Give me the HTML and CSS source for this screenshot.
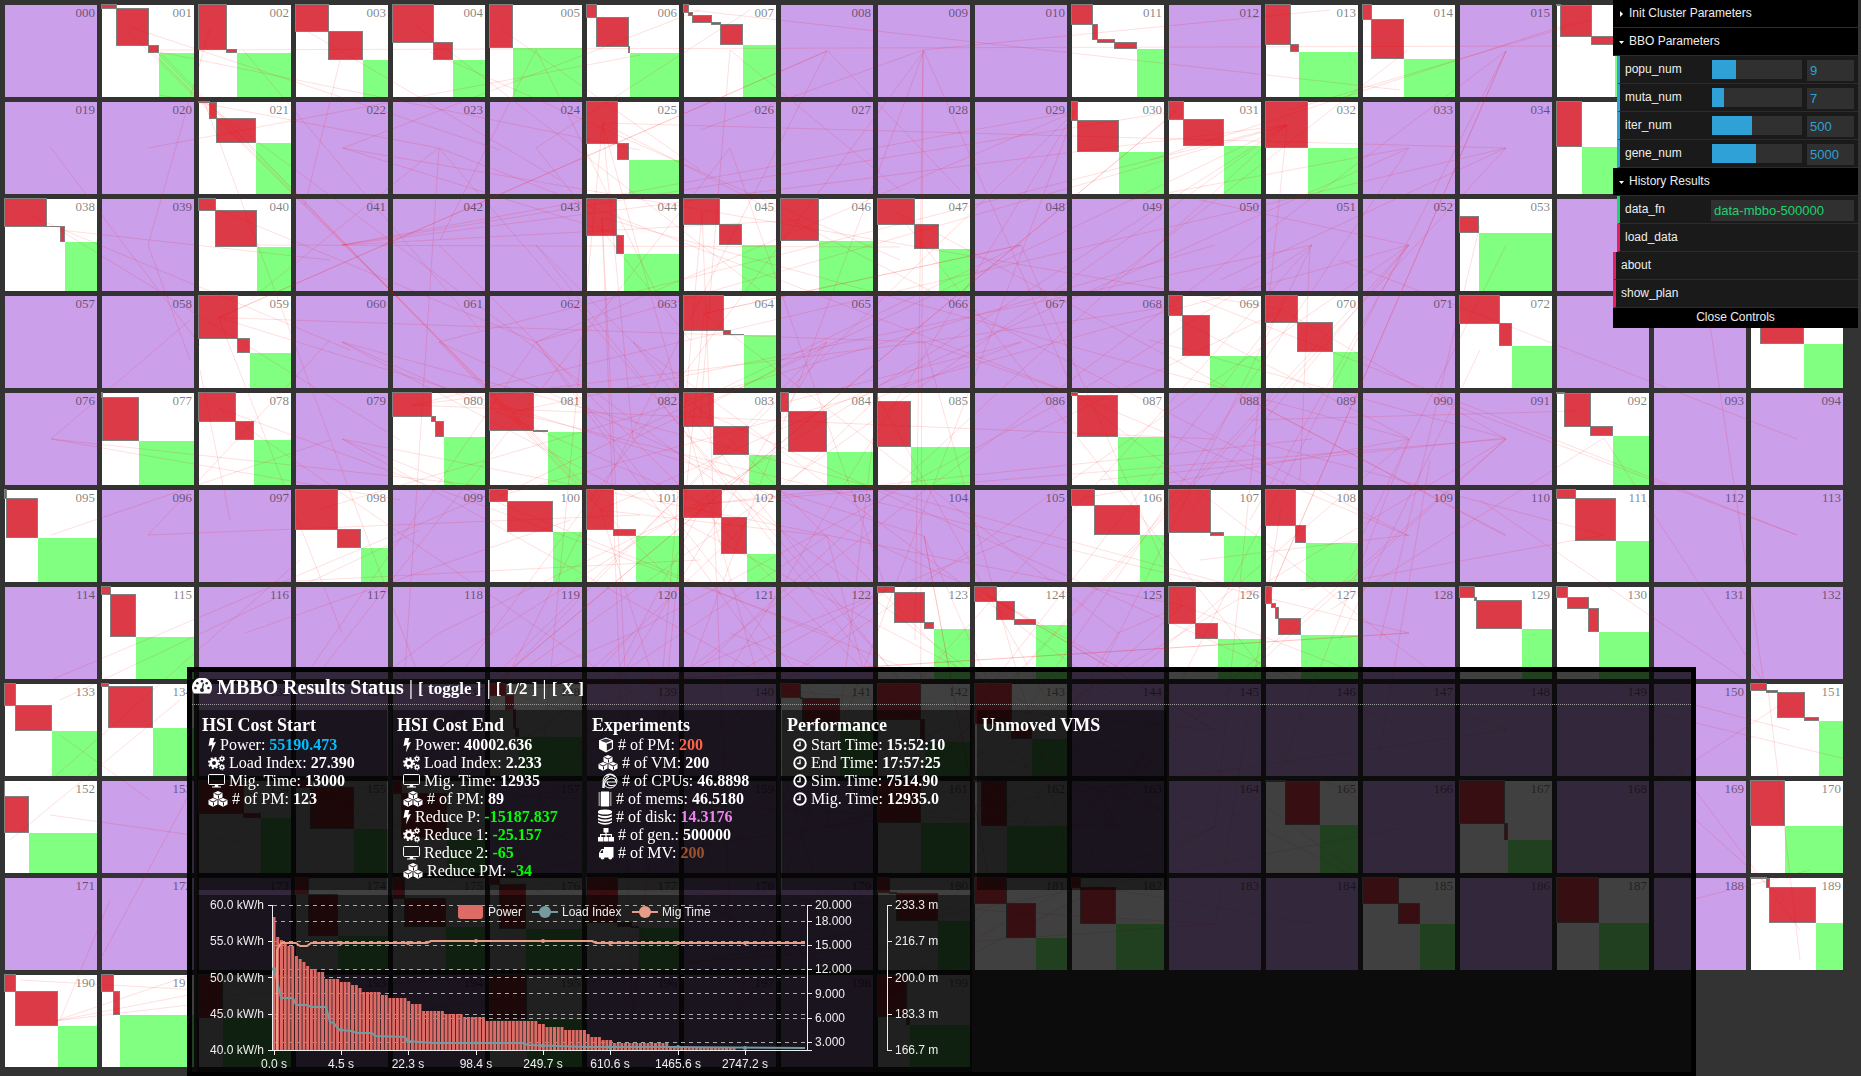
FILE: index.html
```html
<!DOCTYPE html>
<html lang="en">
<head>
<meta charset="utf-8">
<title>MBBO Results Status</title>
<link rel="stylesheet" href="styles.css">
</head>
<body>
<svg class="defs" aria-hidden="true">
  <symbol id="i-bolt" viewBox="0 0 8 16"><path d="M2 1h4.500L5 5.500l3-.5-5 10.500 1-7.500-3.500 1z"/></symbol>
  <symbol id="i-cogs" viewBox="0 0 17 16">
    <g fill="none" stroke="#fff"><circle cx="6" cy="8" r="3.3" stroke-width="2.6"/><circle cx="6" cy="8" r="5.1" stroke-width="1.8" stroke-dasharray="2 2"/>
    <circle cx="14" cy="3.8" r="1.7" stroke-width="1.4"/><circle cx="14" cy="3.8" r="2.7" stroke-dasharray="1.4 1.4"/>
    <circle cx="14" cy="12.2" r="1.7" stroke-width="1.4"/><circle cx="14" cy="12.2" r="2.7" stroke-dasharray="1.4 1.4"/></g></symbol>
  <symbol id="i-desktop" viewBox="0 0 17 16"><rect x=".5" y="1.500" width="16" height="10" rx="1" fill="none" stroke="#fff"/><path d="M7 12h3l.5 1.500H13v1H4v-1h2.500z"/></symbol>
  <symbol id="i-cubes" viewBox="0 0 20 16">
    <path d="M10 0l4.500 2v4.500L10 8.500 5.500 6.500V2z M5 7l4.500 2v4.500L5 15.800.5 13.500V9z M15 7l4.500 2v4.500L15 15.800 10.500 13.500V9z"/>
    <path d="M6.500 2.300L10 4l3.500-1.700M10.500 4.500V7.500 M1.500 9.300L5 11l3.500-1.700M5.500 11.500V14.500 M11.500 9.300L15 11l3.500-1.700M15.500 11.500V14.500" fill="none" stroke="#221c28"/></symbol>
  <symbol id="i-cube" viewBox="0 0 16 16"><path d="M8 0.500l7 2.700v8.600l-7 3.700-7-3.700V3.200z"/><path d="M2.500 3.600L8 5.700l5.500-2.100L8 1.700z M8.800 7v6.800l5-2.700V5.200z" fill="#221c28"/><path d="M8 2l5 1.700L8 5.300 3 3.700z" fill="#443c4a"/></symbol>
  <symbol id="i-cpu" viewBox="0 0 18 16"><g fill="none" stroke="#fff"><circle cx="11" cy="8" r="7"/><path d="M4 15q-1-8 6-12M5 15q0-9 7-10 5 0 5 4H8q0 5 8 3M7 3q5-3 9 1" stroke-width="1.200"/></g></symbol>
  <symbol id="i-mem" viewBox="0 0 14 16"><path d="M3 0.500h8v15H3z"/><path d="M1.500 1.500v13M12.500 1.500v13" stroke="#fff" stroke-width="2" stroke-dasharray="1 1"/></symbol>
  <symbol id="i-disk" viewBox="0 0 14 16"><path d="M0 2.500C0-.3 14-.3 14 2.500v1C14 6.300 0 6.300 0 3.500z M0 5.500q7 3 14 0v2q-7 3.500-14 0z M0 9q7 3 14 0v2q-7 3.500-14 0z M0 12.500q7 3 14 0v1.300q-7 4-14 0z"/></symbol>
  <symbol id="i-sitemap" viewBox="0 0 16 16"><path d="M5.500 1h5v4.500H8.600V7H14v3h2v4.500h-5V10h1.800V8.200H8.600V10h1.900v4.500h-5V10h1.900V8.200H3.200V10H5v4.500H0V10h2V7h5.400V5.500H5.500z"/></symbol>
  <symbol id="i-truck" viewBox="0 0 16 16"><path d="M6 2h9.500v10.500h-1.200a2 2 0 01-4 0H6.500a2 2 0 01-4 0H1V8l2.500-4H6zM2.200 8H5V5.200H4z" fill-rule="evenodd"/></symbol>
  <symbol id="i-clock" viewBox="0 0 14 16"><path d="M7 4.500V8.500H4.200" fill="none" stroke="#fff" stroke-width="1.400"/><circle cx="7" cy="8" r="5.800" fill="none" stroke="#fff" stroke-width="1.900"/></symbol>
  <symbol id="i-gauge" viewBox="0 0 20 16"><path d="M2 15.500A10 10 0 1118 15.500z"/><g fill="#2c2433"><circle cx="3.500" cy="10" r="1.300"/><circle cx="5.300" cy="5.300" r="1.300"/><circle cx="10" cy="3.200" r="1.300"/><circle cx="14.700" cy="5.300" r="1.300"/><circle cx="16.500" cy="10" r="1.300"/></g><path d="M11.500 5.500L10 12" stroke="#2c2433" stroke-width="1.400"/><circle cx="10" cy="12" r="2" fill="#2c2433"/></symbol>
</svg>

<main class="cluster">
  <div class="grid" id="grid"></div>
  <svg class="moves" id="moves" aria-hidden="true"></svg>
</main>

<aside class="gui">
  <button class="folder">
    <svg viewBox="0 0 5 6"><path d="M1 0l3 3-3 3z"/></svg>Init Cluster Parameters</button>
  <button class="folder">
    <svg viewBox="0 0 5 6"><path d="M0 2h5L2.500 5z"/></svg>BBO Parameters</button>
  <div class="row number"><label for="popu">popu_num</label><input type="range" aria-label="popu_num slider" style="--fill:24px"><input class="field" id="popu" type="text" value="9"></div>
  <div class="row number"><label for="muta">muta_num</label><input type="range" aria-label="muta_num slider" style="--fill:12px"><input class="field" id="muta" type="text" value="7"></div>
  <div class="row number"><label for="iter">iter_num</label><input type="range" aria-label="iter_num slider" style="--fill:40px"><input class="field" id="iter" type="text" value="500"></div>
  <div class="row number"><label for="gene">gene_num</label><input type="range" aria-label="gene_num slider" style="--fill:44px"><input class="field" id="gene" type="text" value="5000"></div>
  <button class="folder">
    <svg viewBox="0 0 5 6"><path d="M0 2h5L2.500 5z"/></svg>History Results</button>
  <div class="row string"><label for="datafn">data_fn</label><input class="field wide" id="datafn" type="text" value="data-mbbo-500000"></div>
  <button class="row action">load_data</button>
  <button class="row action root">about</button>
  <button class="row action root">show_plan</button>
  <button class="close">Close Controls</button>
</aside>

<section class="status">
  <header class="status-head">
    <svg class="gauge"><use href="#i-gauge"/></svg>
    <h2>MBBO Results Status</h2>
    <span>|</span><a href="#toggle">[ toggle ]</a><span>|</span><a href="#page">[ 1/2 ]</a><span>|</span><a href="#close">[ X ]</a>
  </header>
  <div class="cards">
    <div class="card"><h3>HSI Cost Start</h3>
      <ul>
        <li><svg class="w8"><use href="#i-bolt"/></svg> Power: <b class="blue">55190.473</b></li>
        <li><svg class="w17"><use href="#i-cogs"/></svg> Load Index: <b>27.390</b></li>
        <li><svg class="w17"><use href="#i-desktop"/></svg> Mig. Time: <b>13000</b></li>
        <li><svg class="w20"><use href="#i-cubes"/></svg> # of PM: <b>123</b></li>
      </ul></div>
    <div class="card"><h3>HSI Cost End</h3>
      <ul>
        <li><svg class="w8"><use href="#i-bolt"/></svg> Power: <b>40002.636</b></li>
        <li><svg class="w17"><use href="#i-cogs"/></svg> Load Index: <b>2.233</b></li>
        <li><svg class="w17"><use href="#i-desktop"/></svg> Mig. Time: <b>12935</b></li>
        <li><svg class="w20"><use href="#i-cubes"/></svg> # of PM: <b>89</b></li>
        <li><svg class="w8"><use href="#i-bolt"/></svg> Reduce P: <b class="lime">-15187.837</b></li>
        <li><svg class="w17"><use href="#i-cogs"/></svg> Reduce 1: <b class="lime">-25.157</b></li>
        <li><svg class="w17"><use href="#i-desktop"/></svg> Reduce 2: <b class="lime">-65</b></li>
        <li><svg class="w20"><use href="#i-cubes"/></svg> Reduce PM: <b class="lime">-34</b></li>
      </ul></div>
    <div class="card"><h3>Experiments</h3>
      <ul>
        <li><svg class="w16"><use href="#i-cube"/></svg> # of PM: <b class="tomato">200</b></li>
        <li><svg class="w20"><use href="#i-cubes"/></svg> # of VM: <b>200</b></li>
        <li><svg class="w20"><use href="#i-cpu"/></svg> # of CPUs: <b>46.8898</b></li>
        <li><svg class="w14"><use href="#i-mem"/></svg> # of mems: <b>46.5180</b></li>
        <li><svg class="w14"><use href="#i-disk"/></svg> # of disk: <b class="violet">14.3176</b></li>
        <li><svg class="w16"><use href="#i-sitemap"/></svg> # of gen.: <b>500000</b></li>
        <li><svg class="w16"><use href="#i-truck"/></svg> # of MV: <b class="sienna">200</b></li>
      </ul></div>
    <div class="card"><h3>Performance</h3>
      <ul>
        <li><svg class="w14"><use href="#i-clock"/></svg> Start Time: <b>15:52:10</b></li>
        <li><svg class="w14"><use href="#i-clock"/></svg> End Time: <b>17:57:25</b></li>
        <li><svg class="w14"><use href="#i-clock"/></svg> Sim. Time: <b>7514.90</b></li>
        <li><svg class="w14"><use href="#i-clock"/></svg> Mig. Time: <b>12935.0</b></li>
      </ul></div>
    <div class="card"><h3>Unmoved VMS</h3></div>
  </div>
  <svg class="chart" id="chart" viewBox="0 0 775 177" role="img" aria-label="Power, load index and migration time"></svg>
</section>
<script src="app.js"></script>
</body>
</html>
```
FILE: styles.css
```css
* { box-sizing: border-box; }
body { margin: 0; background: #333; font-family: "Liberation Serif", serif; }
.defs { position: absolute; width: 0; height: 0; }

/* cluster map */
.cluster { position: relative; }
.grid { display: flex; flex-wrap: wrap; gap: 5px; padding: 5px 0 0 5px; }
.cell { display: grid; width: 92px; height: 92px; background: #cb9fe9; }
.cell.used { background: #fff; }
.cell > * { grid-area: 1 / 1; }
.cell svg { width: 92px; height: 92px; overflow: visible; shape-rendering: crispEdges; }
.cell .vm { fill: #dc3a46; stroke: #808080; }
.cell .free { fill: #80ff80; }
.cell span { padding: 1px 2px 0 0; font-size: 13px; line-height: 14px; text-align: right; color: rgba(0, 0, 0, .5); }
.moves { position: absolute; inset: 0; width: 100%; height: 100%; pointer-events: none; stroke: #f00; stroke-opacity: .13; }

/* parameter controls */
.gui { position: fixed; top: 0; right: 3px; width: 245px; font: 12px/27px "Liberation Sans", sans-serif; color: #eee; }
.gui button { display: block; width: 100%; border: 0; margin: 0; font: inherit; color: inherit; text-align: left; }
.gui .folder { height: 28px; padding: 0 0 2px 6px; background: #000; border-bottom: 1px solid #2c2c2c; line-height: 24px; }
.folder svg { width: 5px; height: 6px; margin-right: 5px; fill: #fff; }
.gui .row { display: flex; align-items: flex-start; width: auto; height: 28px; margin-left: 4px; padding: 4px 4px 0 5px; background: #1a1a1a; border-bottom: 1px solid #2c2c2c; border-left: 3px solid #2fa1d6; line-height: 19px; }
.gui .string { border-left-color: #1ed36f; }
.gui .action { width: 241px; border-left: 3px solid #e61d5f; }
.gui .root { width: 245px; margin-left: 0; }
.row label { flex: 1; }
.row input[type=range] { appearance: none; width: 90px; height: 19px; margin: 0 5px 0 0; background: linear-gradient(#2fa1d6, #2fa1d6) 0 0 / var(--fill) 100% no-repeat #303030; }
.row input[type=range]::-webkit-slider-thumb { appearance: none; width: 0; }
.field { width: 47px; height: 21px; padding: 0 3px; border: 0; background: #303030; color: #2fa1d6; font: 13px "Liberation Sans", sans-serif; }
.field.wide { width: 143px; color: #1ed36f; }
.gui .close { height: 20px; padding: 0 0 2px; background: #000; line-height: 18px; text-align: center; }

/* results window */
.status { position: fixed; top: 667px; left: 187px; right: 165px; border: 5px solid #000; background: rgba(0, 0, 0, .75); color: #fff; }
.status-head { display: flex; align-items: baseline; gap: 5px; height: 33px; border-bottom: 1px dotted #999; font-size: 20px; line-height: 30px; }
.status-head h2 { margin: 0; font-size: 20px; }
.status-head span { font-size: 22px; }
.status-head a { color: #fff; font-size: 17px; font-weight: bold; text-decoration: none; }
.gauge { width: 20px; height: 16px; }
.cards { display: flex; gap: 5px; padding: 5px; }
.card { width: 190px; height: 180px; padding: 5px; background: rgba(0, 0, 0, .5); }
.card h3 { margin: 0; font-size: 18px; line-height: 21px; }
.card ul { margin: 0; padding: 0 0 0 6px; list-style: none; }
.card li { height: 18px; font-size: 16px; line-height: 18px; white-space: nowrap; }
.card li svg { height: 16px; vertical-align: -3px; }
svg { fill: #fff; }
.w8 { width: 8px; } .w14 { width: 14px; } .w16 { width: 16px; } .w17 { width: 17px; } .w20 { width: 20px; }
.blue { color: #00bfff; } .lime { color: #0f0; } .tomato { color: #ff6347; } .violet { color: #ee82ee; } .sienna { color: #a0522d; }

/* chart */
.chart { display: block; width: 775px; height: 177px; margin-left: 5px; background: rgba(0, 0, 0, .5); font: 12px "Liberation Sans", sans-serif; fill: #eee; }
.chart .axis { stroke: #eee; fill: none; shape-rendering: crispEdges; }
.chart .split { stroke: #aaa; stroke-dasharray: 4 4; shape-rendering: crispEdges; }
.chart .bar { fill: #dd6b66; }
.chart .load { stroke: #759aa0; }
.chart .mig { stroke: #e69d87; }
.chart .line { fill: none; stroke-width: 2; stroke-linejoin: round; }
.chart .dot-load { fill: #759aa0; }
.chart .dot-mig { fill: #e69d87; }
```
FILE: app.js
```js
// Width and height of each machine placed on a host, stacked along the diagonal.
const hosts = {
  1: [[15,4],[32,37],[10,7]], 2: [[28,45],[10,3]], 3: [[33,27],[34,28]], 4: [[41,38],[19,17]], 5: [[23,43]],
  6: [[10,13],[32,29],[1,6]], 7: [[5,8],[4,3],[19,7],[9,2],[22,20]], 11: [[21,20],[5,15],[17,3],[22,6]],
  13: [[25,40],[8,7]], 14: [[9,15],[32,39]], 16: [[4,1],[31,31],[23,8]],
  21: [[11,1],[7,16],[39,24]], 25: [[31,42],[11,16]], 30: [[6,19],[41,31]], 31: [[15,18],[40,26]], 32: [[42,46]], 35: [[25,45]],
  38: [[42,28],[14,0],[4,15]], 40: [[17,12],[41,36]], 44: [[30,37],[7,18]], 45: [[36,26],[22,20]], 46: [[38,42]],
  47: [[37,26],[24,24]], 53: [[0,18],[19,16]],
  59: [[39,43],[12,14]], 64: [[40,35],[7,4],[13,0]], 69: [[14,20],[27,40]], 70: [[32,27],[35,29]], 72: [[40,28],[12,22]], 75: [[10,10],[43,38]],
  77: [[1,5],[36,43]], 78: [[37,29],[18,18]], 80: [[39,24],[4,5],[8,15]], 81: [[44,38],[14,1]], 83: [[30,34],[35,28]],
  84: [[8,19],[38,40]], 85: [[0,9],[33,45]], 87: [[6,3],[40,41]], 92: [[8,1],[26,33],[22,9]],
  95: [[2,9],[31,39]], 98: [[42,40],[23,18]], 100: [[18,12],[45,30]], 101: [[27,40],[22,6]], 102: [[38,28],[25,36]],
  106: [[23,16],[45,29]], 107: [[42,43],[13,3]], 108: [[30,36],[10,17]], 111: [[19,9],[40,42]],
  115: [[9,8],[25,42]], 123: [[17,6],[30,30],[9,6]], 124: [[22,15],[18,18],[21,5]], 126: [[27,37],[22,15]],
  127: [[6,17],[4,4],[3,11],[22,16]], 129: [[15,11],[2,3],[45,28]], 130: [[11,11],[21,11],[10,23]],
  133: [[11,22],[36,25]], 134: [[7,3],[44,41]], 138: [[16,12],[8,14],[2,19],[3,8]], 141: [[20,14],[2,1],[37,25]],
  142: [[43,36],[4,22]], 143: [[37,40],[20,15]], 151: [[16,7],[11,2],[27,25],[14,3]],
  152: [[0,16],[24,36]], 154: [[45,33],[17,4]], 155: [[15,7],[43,41]], 156: [[9,13],[45,44]], 161: [[43,42]], 162: [[7,1],[25,44]],
  165: [[20,1],[34,43]], 167: [[45,43],[3,16]], 170: [[34,45]],
  174: [[13,17],[29,41]], 175: [[12,21],[41,28]], 176: [[10,7],[26,44]], 177: [[31,45],[14,4],[7,1]], 180: [[12,15],[7,1],[41,27]],
  181: [[32,26],[29,34]], 182: [[9,10],[35,36]], 185: [[36,26],[21,20]], 187: [[42,45]], 189: [[16,1],[3,9],[46,35]],
  190: [[11,17],[42,34]], 191: [[12,17],[6,23]], 192: [[24,43]], 195: [[37,45]], 199: [[29,42],[3,8]]
};

let html = '';
for (let i = 0; i < 200; i++) {
  const vms = hosts[i];
  let inner = '';
  if (vms) {
    let x = 0, y = 0;
    vms.forEach(([w, h]) => {
      inner += `<rect class="vm" x="${x - .5}" y="${y - .5}" width="${w}" height="${h}"/>`;
      if (!w || !h) inner += `<path class="vm" d="M${x - .5} ${y - .5}l${w} ${h}"/>`;
      x += w; y += h;
    });
    inner = `<svg>${inner}<rect class="free" x="${x}" y="${y}" width="${92 - x}" height="${92 - y}"/></svg>`;
  }
  html += `<div class="cell${vms ? ' used' : ''}">${inner}<span>${String(i).padStart(3, '0')}</span></div>`;
}
document.getElementById('grid').innerHTML = html;

// Migration routes.
const routes = [
  [155,50,1560,46],[155,50,600,503],[160,52,690,600],[150,50,590,490],[125,28,400,300],[210,28,148,245],[148,245,190,360],
  [51,148,200,345],[148,148,640,55],[130,27,500,150],[160,52,640,150],[340,60,305,205],[243,50,480,330],[305,30,560,180],
  [415,25,760,290],[430,52,900,260],[343,148,700,10],[343,148,620,235],[438,148,250,300],[438,148,160,95],[536,148,690,340],
  [536,148,750,10],[536,50,440,240],[536,50,660,300],[500,28,700,170],[28,215,350,350],[60,230,400,440],[60,230,330,260],
  [250,245,900,247],[923,50,915,640],[923,50,920,860],[923,50,700,130],[923,50,1330,10],[730,50,900,190],[827,50,960,190],
  [730,50,700,420],[690,10,1400,90],[51,439,400,500],[51,439,190,320],[51,439,520,490],[51,535,330,440],[148,535,640,515],
  [148,535,330,340],[230,520,200,370],[220,585,700,560],[245,633,570,520],[51,680,500,490],[60,700,420,530],[51,780,300,560],
  [1797,439,1340,260],[1797,535,1200,300],[1797,535,1440,400],[1604,438,1762,680],[1604,438,1330,610],[1710,325,1765,690],
  [1505,438,1150,340],[1505,438,1100,480],[1577,411,1250,420],[1604,535,1250,440],[1604,535,1300,590],[1408,438,1180,320],
  [1408,535,1200,560],[1506,535,1240,395],[1590,20,1290,110],[1575,22,1150,160],[1408,50,1100,290],[1408,148,1130,200],
  [1506,148,1220,280],[1506,245,1350,560],[1408,245,1250,520],[1310,245,1300,480],[1408,245,1200,200],[1480,225,1380,640],
  [1430,460,1380,750],[1480,350,1340,640],[1745,680,1480,500],[1600,700,1850,760],[1780,705,1650,790],[1790,730,1600,680],
  [1768,690,1800,960],[1650,730,1800,930],[1640,770,1785,900],[1690,900,1810,870],[100,960,240,700],[60,1020,110,900],
  [55,1021,230,1000],[55,1021,240,985],[55,1021,220,965],[20,980,200,990],[10,840,180,700],[50,815,300,850],[60,735,150,800]
];
let seed = 7;
const rnd = n => (seed = (seed * 16807) % 2147483647) % n;
const purple = [], used = Object.keys(hosts).map(Number);
for (let i = 0; i < 200; i++) if (!hosts[i] && i % 19 > 2 && i % 19 < 16) purple.push(i);
const inner = used.filter(i => i % 19 > 1 && i % 19 < 15 && i > 20);
for (let k = 0; k < 165; k++) {
  const a = purple[rnd(purple.length)], b = inner[rnd(inner.length)];
  const [w, h] = hosts[b][0];
  routes.push([5 + a % 19 * 97 + 46, 5 + Math.floor(a / 19) * 97 + 46, 5 + b % 19 * 97 + w / 2, 5 + Math.floor(b / 19) * 97 + h / 2]);
}
document.getElementById('moves').innerHTML = routes.map(r => `<path d="M${r[0]} ${r[1]}L${r[2]} ${r[3]}"/>`).join('');

// Chart: y values are plot positions, 10 at the top and 155 on the base line.
let c = '';
[10, 26, 46, 50, 74, 82, 98, 119, 123, 147].forEach(y => c += `<path class="split" d="M76 ${y + .5}H610"/>`);
const steps = [[1,22],[1,42],[1,45],[1,48],[2,51],[1,61],[1,64],[1,67],[1,71],[2,74],[2,77],[4,84],[3,87],[2,90],[1,93],[5,97],
  [2,100],[5,103],[1,106],[3,109],[6,116],[5,119],[6,122],[14,126],[2,129],[5,132],[6,135],[1,139],[3,142],[3,145],[15,148],[18,152],[19,155]];
let n = 0;
steps.forEach(([count, y]) => {
  for (let k = 0; k < count; k++, n++) c += `<rect class="bar" x="${(75.5 + n * 3.74).toFixed(2)}" y="${y}" width="3" height="${156 - y}"/>`;
});
const ticks = [77, 144, 211, 279, 346, 413, 481, 548];
c += `<path class="axis" d="M75.500 10V155.500H610.500V10M690.500 10V155.500${[10,46,82,119,155].map(y => `M71 ${y + .5}h5M690 ${y + .5}h5`).join('')}${[10,26,50,74,98,123,147,155].map(y => `M610 ${y + .5}h5`).join('')}${ticks.map(x => `M${x + .5} 155v5`).join('')}"/>`;
c += `<path class="line load" d="M77 74L79 81L84 103H96L99 110H110L114 112H129L133 127L137 128L141 134L144 135L154 136L160 138H175L178 141L208 142L211 146L223 147L236 148H326L331 150L389 152H476L608 153"/>`;
c += `<path class="line mig" d="M80 155V55L84 48H99L103 51H110L114 48H230L234 46H395L399 48H608"/>`;
const loads = [74, 135, 146, 148, 151, 152, 152, 153], migs = [155, 48, 48, 46, 46, 48, 48, 48];
ticks.forEach((x, i) => {
  c += `<circle class="dot-load" cx="${x}" cy="${loads[i]}" r="2"/>`;
  if (i) c += `<circle class="dot-mig" cx="${x}" cy="${migs[i]}" r="2"/>`;
});
const text = (s, x, y, a) => c += `<text x="${x}" y="${y}" text-anchor="${a}">${s}</text>`;
[['60.0',14],['55.0',50],['50.0',87],['45.0',123],['40.0',159]].forEach(([s, y]) => text(s + ' kW/h', 67, y, 'end'));
[['20.000',14],['18.000',30],['15.000',54],['12.000',78],['9.000',103],['6.000',127],['3.000',151]].forEach(([s, y]) => text(s, 618, y, 'start'));
[['233.3',14],['216.7',50],['200.0',87],['183.3',123],['166.7',159]].forEach(([s, y]) => text(s + ' m', 698, y, 'start'));
['0.0','4.5','22.3','98.4','249.7','610.6','1465.6','2747.2'].forEach((s, i) => text(s + ' s', ticks[i], 173, 'middle'));
c += '<rect class="bar" x="261" y="10" width="25" height="14" rx="3"/>';
c += '<path class="line load" d="M335 17H361"/><circle class="dot-load" cx="348" cy="17" r="6"/>';
c += '<path class="line mig" d="M435 17H461"/><circle class="dot-mig" cx="448" cy="17" r="6"/>';
text('Power', 291, 21, 'start'); text('Load Index', 365, 21, 'start'); text('Mig Time', 465, 21, 'start');
document.getElementById('chart').innerHTML = c;
```
